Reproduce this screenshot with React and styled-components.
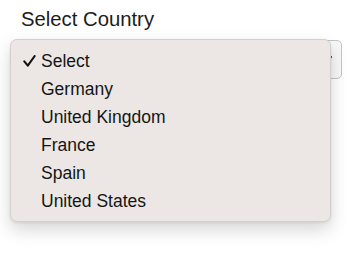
import React from 'react';
import styled, { createGlobalStyle } from 'styled-components';

const GlobalStyle = createGlobalStyle`
  body {
    margin: 0;
    background: #fff;
    font-family: "Liberation Sans", Arial, sans-serif;
  }
`;

const Page = styled.div`
  padding: 7px 0 0 21px;
  width: 350px;
  height: 256px;
  box-sizing: border-box;
`;

const Label = styled.div`
  font-size: 20.3px;
  line-height: 24px;
  color: #1c1c1c;
  margin-bottom: 9px;
`;

const Field = styled.div`
  position: relative;
  width: 321px;
`;

const SelectBox = styled.div`
  height: 39px;
  box-sizing: border-box;
  border: 1px solid #c4c4c4;
  border-radius: 5px;
  background: #f8f8f8;
  display: flex;
  align-items: center;
  justify-content: flex-end;
  padding-right: 6px;
`;

const Menu = styled.ul`
  position: absolute;
  left: -11px;
  top: -1px;
  width: 321px;
  margin: 0;
  padding: 7px 0 6px;
  box-sizing: border-box;
  list-style: none;
  background: #ece7e4;
  border: 1px solid #d3cfcc;
  border-radius: 7px;
  box-shadow: 0 8px 18px rgba(0, 0, 0, 0.16), 0 1px 3px rgba(0, 0, 0, 0.08);
`;

const Item = styled.li`
  position: relative;
  height: 28px;
  line-height: 28px;
  padding-left: 30px;
  font-size: 17.5px;
  color: #151515;
`;

const Check = styled.span`
  position: absolute;
  left: 12px;
  top: 8px;
  width: 13px;
  height: 12px;
  display: flex;
`;

const countries = ['Select', 'Germany', 'United Kingdom', 'France', 'Spain', 'United States'];

const App = () => {
  return (
    <>
      <GlobalStyle />
      <Page>
        <Label>Select Country</Label>
        <Field>
          <SelectBox>
            <svg width="8" height="10" viewBox="0 0 8 10">
              <path d="M1 6 L4 2" stroke="#111" strokeWidth="1.8" strokeLinecap="round" fill="none" />
            </svg>
          </SelectBox>
          <Menu>
            {countries.map((c, index) => (
              <Item key={index}>
                {index === 0 && (
                  <Check>
                    <svg width="13" height="12" viewBox="0 0 13 12">
                      <path d="M1.3 6.3 L4.8 10.6 L11.7 1" stroke="#111" strokeWidth="2.1" fill="none" strokeLinecap="round" strokeLinejoin="round" />
                    </svg>
                  </Check>
                )}
                {c}
              </Item>
            ))}
          </Menu>
        </Field>
      </Page>
    </>
  );
};

export default App;
